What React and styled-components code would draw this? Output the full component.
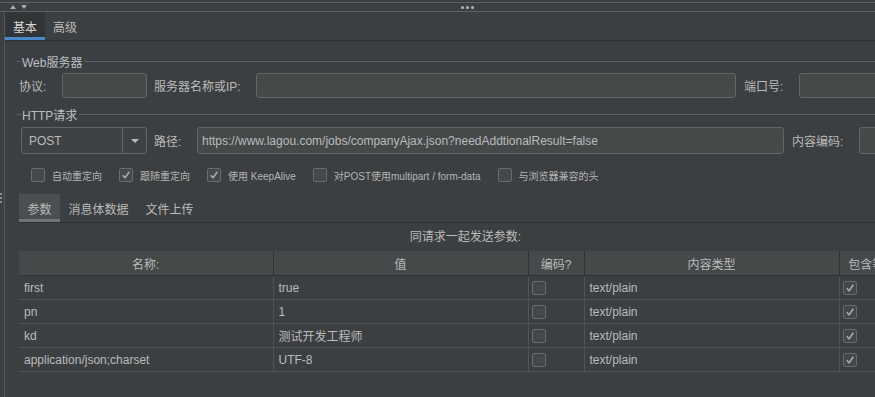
import React from "react";
import styled, { createGlobalStyle } from "styled-components";

const GlobalStyle = createGlobalStyle`
  html, body {
    margin: 0;
    padding: 0;
    background: #3c3f41;
    overflow: hidden;
  }
  body {
    font-family: "Liberation Sans", "Noto Sans CJK SC", sans-serif;
    font-size: 12px;
    color: #bbbbbb;
  }
`;

const Page = styled.div`
  width: 875px;
  height: 397px;
  display: flex;
  flex-direction: column;
  overflow: hidden;
`;

const TopStrip = styled.div`
  margin-top: 2px;
  height: 8px;
  border-top: 1px solid #5e6163;
  border-bottom: 1px solid #5e6163;
  display: flex;
  align-items: center;
  padding-left: 10px;
`;

const Arrow = styled.span`
  width: 0;
  height: 0;
  border-left: 3.5px solid transparent;
  border-right: 3.5px solid transparent;
  ${(p) =>
    p.down
      ? "border-top: 4px solid #a9acae; margin-left: 5px;"
      : "border-bottom: 4px solid #a9acae;"}
`;

const Dots = styled.span`
  margin-left: 434px;
  display: flex;
  gap: 2px;
`;

const Dot = styled.span`
  width: 3px;
  height: 3px;
  border-radius: 50%;
  background: #b5b8ba;
`;

const Body = styled.div`
  flex: 1;
  display: flex;
  min-height: 0;
`;

const Gutter = styled.div`
  width: 4px;
  border-right: 1px solid #55585a;
  display: flex;
  flex-direction: column;
  gap: 2px;
  padding-top: 181px;
  box-sizing: content-box;
`;

const GutterDot = styled.span`
  width: 2px;
  height: 2px;
  background: #8c8f91;
`;

const Main = styled.div`
  flex: 1;
  display: flex;
  flex-direction: column;
  min-width: 0;
`;

const TabBar = styled.div`
  display: flex;
  height: 28px;
  border-bottom: 1px solid #2f3133;
`;

const Tab = styled.div`
  padding: 0 8px;
  display: flex;
  align-items: center;
  font-size: 12px;
  color: ${(p) => (p.active ? "#d6d6d6" : "#bbbbbb")};
  background: ${(p) => (p.active ? "#323537" : "transparent")};
  box-shadow: ${(p) => (p.active ? "inset 0 -3px 0 #4a88c7" : "none")};
`;

const Content = styled.div`
  padding-left: 12px;
  display: flex;
  flex-direction: column;
`;

const GroupTitle = styled.div`
  display: flex;
  align-items: center;
  height: 14px;
  margin-top: ${(p) => p.top}px;

  &::before {
    content: "";
    width: 4px;
    height: 1px;
    background: #5e6163;
    margin-right: 1px;
  }
  &::after {
    content: "";
    flex: 1;
    height: 1px;
    background: #5e6163;
    margin-left: 2px;
  }
`;

const TitleText = styled.span`
  color: #b9bfc6;
  font-size: 12px;
`;

const FormRow = styled.div`
  display: flex;
  align-items: center;
  height: ${(p) => p.h}px;
  margin-top: ${(p) => p.top}px;
  padding-left: ${(p) => p.left}px;
  white-space: nowrap;
`;

const Label = styled.span`
  flex: none;
  width: ${(p) => p.w}px;
  margin-left: ${(p) => p.ml || 0}px;
  font-size: 12px;
  color: #bbbbbb;
`;

const Field = styled.div`
  flex: none;
  width: ${(p) => p.w}px;
  height: 100%;
  box-sizing: border-box;
  border: 1px solid #646464;
  border-radius: 3px;
  background: #45494a;
  display: flex;
  align-items: center;
  padding-left: 4px;
  overflow: hidden;
  font-size: 12px;
  color: #bbbbbb;
`;

const Select = styled.div`
  flex: none;
  width: 126px;
  height: 100%;
  box-sizing: border-box;
  border: 1px solid #646464;
  border-radius: 3px;
  background: #3f4244;
  display: flex;
  align-items: stretch;
`;

const SelectValue = styled.span`
  flex: 1;
  display: flex;
  align-items: center;
  padding-left: 7px;
  font-size: 12px;
`;

const SelectButton = styled.span`
  width: 23px;
  border-left: 1px solid #646464;
  display: flex;
  align-items: center;
  justify-content: center;

  &::after {
    content: "";
    border-left: 4px solid transparent;
    border-right: 4px solid transparent;
    border-top: 4px solid #bbbbbb;
  }
`;

const OptionRow = styled.div`
  display: flex;
  align-items: center;
  gap: 17px;
  height: 14px;
  margin-top: 14px;
  padding-left: 14px;
`;

const Option = styled.label`
  display: flex;
  align-items: center;
  gap: 7px;
  font-size: 10px;
  color: #b5b5b5;
  white-space: nowrap;
`;

const Box = styled.span`
  flex: none;
  width: 12px;
  height: 12px;
  border: 1px solid #6b6b6b;
  border-radius: 2px;
  background: #43494a;
  display: flex;
  align-items: center;
  justify-content: center;
`;

const SubTabBar = styled.div`
  display: flex;
  height: 28px;
  margin-top: 12px;
  margin-left: 2px;
  border-bottom: 1px solid #2f3133;
`;

const SubTab = styled.div`
  padding: 0 8.5px;
  display: flex;
  align-items: center;
  font-size: 12px;
  color: #bbbbbb;
  background: ${(p) => (p.active ? "#4b4f51" : "transparent")};
  box-shadow: ${(p) => (p.active ? "inset 0 -3px 0 #6f7375" : "none")};
`;

const TableWrap = styled.div`
  width: 893px;
  margin-left: 2px;
  flex: none;
`;

const Caption = styled.div`
  height: 14px;
  margin-top: 7px;
  margin-bottom: 7px;
  text-align: center;
  line-height: 14px;
  font-size: 12px;
`;

const Table = styled.table`
  border-collapse: collapse;
  table-layout: fixed;
  width: 893px;
`;

const Th = styled.th`
  height: 24px;
  padding: 0;
  background: #45494a;
  border-right: 1px solid #323436;
  border-bottom: 1px solid #323436;
  font-weight: normal;
  font-size: 12px;
  color: #bbbbbb;
  text-align: center;
  white-space: nowrap;
  overflow: hidden;
`;

const Td = styled.td`
  height: 23px;
  padding: 0 0 0 ${(p) => (p.box ? 3 : 5)}px;
  border-right: 1px solid #4f5355;
  border-bottom: 1px solid #4f5355;
  font-size: 12px;
  color: #bbbbbb;
  white-space: nowrap;
  overflow: hidden;
  vertical-align: middle;
`;

const Check = ({ on }) => (
  <Box>
    {on && (
      <svg width="10" height="10" viewBox="0 0 10 10">
        <path
          d="M1.8 5.2 L4 7.8 L8.4 1.8"
          fill="none"
          stroke="#a9a9a9"
          strokeWidth="1.6"
        />
      </svg>
    )}
  </Box>
);

const options = [
  { text: "自动重定向", on: false },
  { text: "跟随重定向", on: true },
  { text: "使用 KeepAlive", on: true },
  { text: "对POST使用multipart / form-data", on: false },
  { text: "与浏览器兼容的头", on: false },
];

const params = [
  { name: "first", value: "true" },
  { name: "pn", value: "1" },
  { name: "kd", value: "测试开发工程师" },
  { name: "application/json;charset", value: "UTF-8" },
];

export default function App() {
  return (
    <Page>
      <GlobalStyle />
      <TopStrip>
        <Arrow />
        <Arrow down />
        <Dots>
          <Dot />
          <Dot />
          <Dot />
        </Dots>
      </TopStrip>
      <Body>
        <Gutter>
          <GutterDot />
          <GutterDot />
          <GutterDot />
        </Gutter>
        <Main>
          <TabBar>
            <Tab active>基本</Tab>
            <Tab>高级</Tab>
          </TabBar>
          <Content>
            <GroupTitle top={13}>
              <TitleText>Web服务器</TitleText>
            </GroupTitle>
            <FormRow h={25} top={5} left={2}>
              <Label w={43}>协议:</Label>
              <Field w={85} />
              <Label w={102} ml={7}>
                服务器名称或IP:
              </Label>
              <Field w={480} />
              <Label w={55} ml={8}>
                端口号:
              </Label>
              <Field w={100} />
            </FormRow>

            <GroupTitle top={9}>
              <TitleText>HTTP请求</TitleText>
            </GroupTitle>
            <FormRow h={27} top={6} left={4}>
              <Select>
                <SelectValue>POST</SelectValue>
                <SelectButton />
              </Select>
              <Label w={43} ml={7}>
                路径:
              </Label>
              <Field w={587}>
                https://www.lagou.com/jobs/companyAjax.json?needAddtionalResult=false
              </Field>
              <Label w={67} ml={8}>
                内容编码:
              </Label>
              <Field w={60} />
            </FormRow>

            <OptionRow>
              {options.map((o) => (
                <Option key={o.text}>
                  <Check on={o.on} />
                  {o.text}
                </Option>
              ))}
            </OptionRow>

            <SubTabBar>
              <SubTab active>参数</SubTab>
              <SubTab>消息体数据</SubTab>
              <SubTab>文件上传</SubTab>
            </SubTabBar>

            <TableWrap>
              <Caption>同请求一起发送参数:</Caption>
              <Table>
                <colgroup>
                  <col style={{ width: 254 }} />
                  <col style={{ width: 255 }} />
                  <col style={{ width: 56 }} />
                  <col style={{ width: 255 }} />
                  <col style={{ width: 73 }} />
                </colgroup>
                <thead>
                  <tr>
                    <Th>名称:</Th>
                    <Th>值</Th>
                    <Th>编码?</Th>
                    <Th>内容类型</Th>
                    <Th>包含等于?</Th>
                  </tr>
                </thead>
                <tbody>
                  {params.map((p) => (
                    <tr key={p.name}>
                      <Td>{p.name}</Td>
                      <Td>{p.value}</Td>
                      <Td box>
                        <Check />
                      </Td>
                      <Td>text/plain</Td>
                      <Td box>
                        <Check on />
                      </Td>
                    </tr>
                  ))}
                </tbody>
              </Table>
            </TableWrap>
          </Content>
        </Main>
      </Body>
    </Page>
  );
}
